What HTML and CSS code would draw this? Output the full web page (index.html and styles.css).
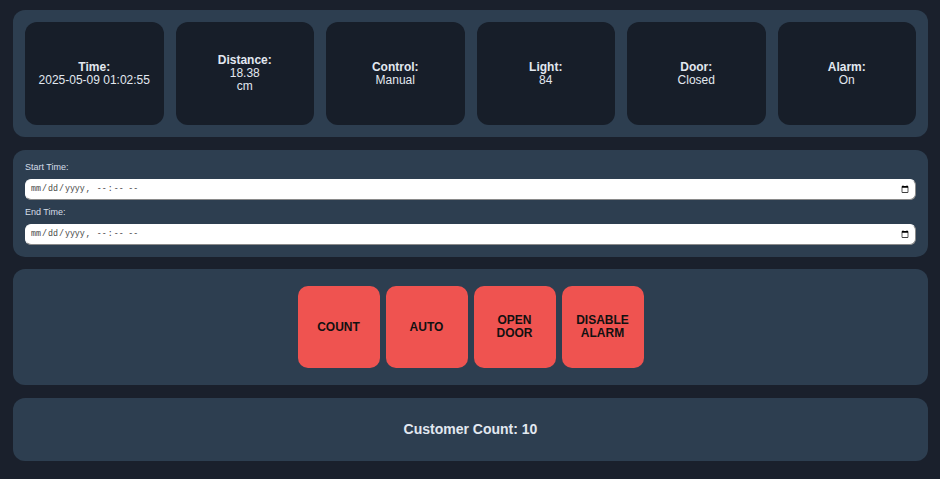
FILE: index.html
```html
<!DOCTYPE html>
<html>
<head>
<meta charset="utf-8">
<link rel="stylesheet" href="styles.css">
</head>
<body>
<div class="page">
  <section class="panel stats">
    <div class="card"><b>Time:</b><span>2025-05-09 01:02:55</span></div>
    <div class="card"><b>Distance:</b><span>18.38<br>cm</span></div>
    <div class="card"><b>Control:</b><span>Manual</span></div>
    <div class="card"><b>Light:</b><span>84</span></div>
    <div class="card"><b>Door:</b><span>Closed</span></div>
    <div class="card"><b>Alarm:</b><span>On</span></div>
  </section>
  <section class="panel range">
    <label class="lbl">Start Time:</label>
    <input class="dt" type="datetime-local">
    <label class="lbl">End Time:</label>
    <input class="dt" type="datetime-local">
  </section>
  <section class="panel actions">
    <button class="btn">COUNT</button>
    <button class="btn">AUTO</button>
    <button class="btn">OPEN<br>DOOR</button>
    <button class="btn">DISABLE<br>ALARM</button>
  </section>
  <section class="panel count">Customer Count: 10</section>
</div>
</body>
</html>
```
FILE: styles.css
```css
html, body {
  margin: 0;
  padding: 0;
  background: #1a202c;
  font-family: "Liberation Sans", Arial, sans-serif;
  color: #e2e8f0;
}
.page {
  padding: 10px 12px 12px 13px;
  display: flex;
  flex-direction: column;
  gap: 12.5px;
}
.panel {
  background: #2d3e50;
  border-radius: 12px;
  box-sizing: border-box;
}
.stats {
  padding: 12px;
  display: grid;
  grid-template-columns: repeat(6, 1fr);
  gap: 12px;
  height: 127px;
}
.card {
  background: #171e29;
  border-radius: 12px;
  display: flex;
  flex-direction: column;
  align-items: center;
  justify-content: center;
  text-align: center;
  font-size: 12px;
  line-height: 13px;
}
.card b { font-weight: bold; }
.range {
  padding: 11px 12px 12px;
  display: flex;
  flex-direction: column;
  height: 107px;
}
.lbl {
  font-size: 9px;
  line-height: 12px;
  color: #d5dde8;
  margin-bottom: 6px;
}
.dt {
  height: 21px;
  box-sizing: border-box;
  border: 1px solid #fff;
  border-right-color: #8a8a8a;
  border-bottom-color: #8a8a8a;
  border-radius: 6px;
  background: #fff;
  font-family: "Liberation Mono", monospace;
  font-size: 8.3px;
  padding: 0 4px;
  margin: 0;
  color: #444;
}
.dt + .lbl { margin-top: 6px; }
.actions {
  display: flex;
  justify-content: center;
  align-items: center;
  gap: 6px;
  height: 116px;
}
.btn {
  width: 82px;
  height: 82px;
  border: none;
  border-radius: 10px;
  background: #ef5350;
  color: #111;
  font-family: "Liberation Sans", Arial, sans-serif;
  font-weight: bold;
  font-size: 12px;
  line-height: 13px;
  padding: 0;
}
.count {
  height: 63px;
  display: flex;
  align-items: center;
  justify-content: center;
  font-weight: bold;
  font-size: 14px;
}
```
